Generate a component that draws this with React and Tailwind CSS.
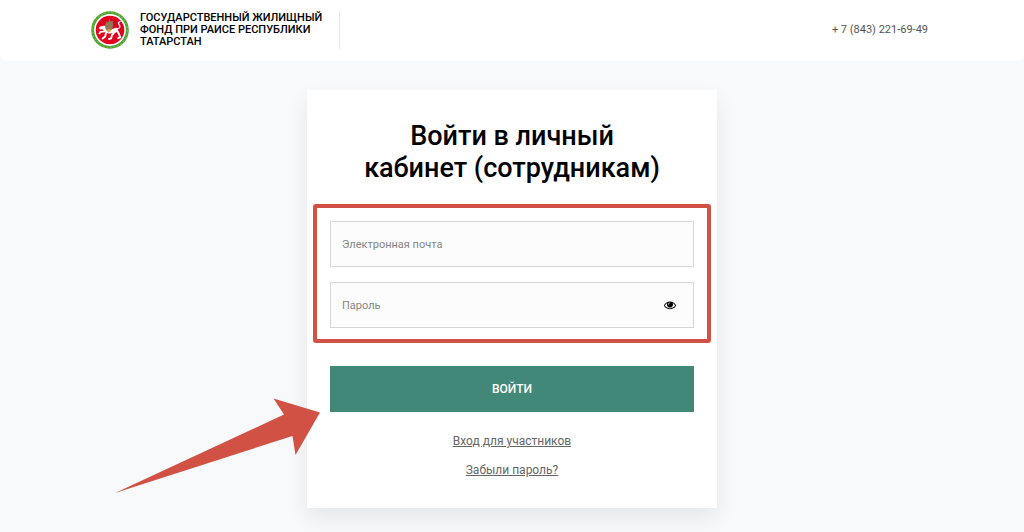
import React, { useState } from 'react'

const Emblem = () => (
  <svg viewBox="0 0 38 38" className="h-[38px] w-[38px] shrink-0" aria-hidden="true">
    <circle cx="19" cy="19" r="18.8" fill="#46a035" />
    <circle cx="19" cy="19" r="17.4" fill="none" stroke="#7cbb3c" strokeWidth="1.2" strokeDasharray="2.2 1.4" />
    <circle cx="19" cy="19" r="15.9" fill="#fff" />
    <circle cx="19" cy="19" r="14.3" fill="#e2001f" />
    {/* winged leopard */}
    <g fill="none" stroke="#fff" strokeLinecap="round" strokeLinejoin="round">
      <path d="M13.500 17.500Q18 22.500 25 19" strokeWidth="4.200" />
      <path d="M9.600 17L13 16.200" strokeWidth="3" />
      <path d="M13.500 20.500L9.500 20.800L8.400 22.600" strokeWidth="1.700" />
      <path d="M15 22L14.200 25.500L11.600 27.600" strokeWidth="1.900" />
      <path d="M24 20.500L20.800 24.500L20.200 27.400L18 28" strokeWidth="1.900" />
      <path d="M26 19.500L28 23L29.200 26.400L27.200 27.200" strokeWidth="1.900" />
      <path d="M26.400 18Q30.500 16.500 28 13.500Q26.500 11.500 29 10.500" strokeWidth="1.300" />
    </g>
    <path d="M14.400 18l-.2-4.400 1.600-3.600 1.200 1.800 1.600-4.600 1.200 3.800 1.600-2 .8 4.400-.8 4.600-4 3z" fill="#8f7a55" />
    <circle cx="18" cy="19.800" r="1.800" fill="#e8a33a" />
  </svg>
)

const EyeIcon = () => (
  <svg viewBox="0 0 1792 1792" className="h-3 w-3" fill="currentColor" aria-hidden="true">
    <path d="M1664 960q-152-236-381-353 61 104 61 225 0 185-131.5 316.5t-316.5 131.5-316.5-131.5-131.5-316.5q0-121 61-225-229 117-381 353 133 205 333.5 326.5t434.5 121.5 434.5-121.5 333.5-326.5zm-720-384q0-20-14-34t-34-14q-125 0-214.5 89.5t-89.5 214.5q0 20 14 34t34 14 34-14 14-34q0-86 61-147t147-61q20 0 34-14t14-34zm848 384q0 34-20 69-140 230-376.5 368.5t-499.5 138.5-499.5-139-376.5-368q-20-35-20-69t20-69q140-229 376.5-368t499.5-139 499.5 139 376.5 368q20 35 20 69z" />
  </svg>
)

const Header = () => {
  return (
    <header className="rounded-b-lg bg-white">
      <div className="mx-auto flex max-w-[842px] items-center justify-between pt-[11px] pb-3 pr-[5px]">
        <a href="#home" className="flex items-center gap-[11px] border-r border-gray-200 pr-3">
          <Emblem />
          <span className="w-[187px] text-[11px] leading-3 font-medium text-black uppercase">
            Государственный жилищный фонд при Раисе Республики Татарстан
          </span>
        </a>
        <a href="tel:+78432216949" className="text-[11px] leading-4 text-[#555]">+ 7 (843) 221-69-49</a>
      </div>
    </header>
  )
}

const inputClass = 'block h-[46px] w-full border border-[#d5d5d5] bg-[#fcfcfc] pl-[11px] text-[11px] text-black outline-none placeholder:text-[#858585]'

const App = () => {
  const [showPassword, setShowPassword] = useState(false);
  return (
    <div className="min-h-screen bg-[#f8f9fb] font-['Roboto','Liberation_Sans',sans-serif]">
      <Header />
      <main className="px-4 pt-[29px] pb-6">
        <div className="relative mx-auto max-w-[410px] bg-white px-[23px] pt-[30px] pb-[30px] shadow-[0_10px_20px_rgba(0,0,0,0.08)]">
          <h1 className="text-center text-[27px] leading-8 font-medium text-black">
            Войти в личный<br />кабинет (сотрудникам)
          </h1>
          <form onSubmit={(e) => e.preventDefault()} className="mt-[37px]">
            <div className="relative flex flex-col gap-[15px]">
              <input type="email" aria-label="Электронная почта" placeholder="Электронная почта" className={inputClass} />
              <div className="relative">
                <input type={showPassword ? 'text' : 'password'} aria-label="Пароль" placeholder="Пароль" className={inputClass} />
                <button
                  type="button"
                  aria-label="Показать пароль"
                  onClick={() => setShowPassword(!showPassword)}
                  className="absolute inset-y-0 right-[18px] flex items-center text-black"
                >
                  <EyeIcon />
                </button>
              </div>
              <div className="pointer-events-none absolute -inset-x-[17px] -top-[17px] -bottom-[15px] rounded-[3px] border-4 border-[#d15144]" />
            </div>
            <button type="submit" className="mt-[38px] block h-[46px] w-full bg-[#418878] text-xs font-medium text-white uppercase">
              Войти
            </button>
          </form>
          <div className="mt-[21px] flex flex-col items-center gap-[13px] text-xs leading-4 text-[#666]">
            <a href="#members" className="underline">Вход для участников</a>
            <a href="#forgot" className="underline">Забыли пароль?</a>
          </div>
          {/* pointer to the submit button */}
          <svg viewBox="0 0 206 96" className="pointer-events-none absolute top-[308px] -left-[192px] h-24 w-[206px]" aria-hidden="true">
            <path d="M0 95L169 16.5L158.500 0.500L205 14.500L180.500 57L177.500 38Z" fill="#d15144" />
          </svg>
        </div>
      </main>
    </div>
  )
}

export default App
